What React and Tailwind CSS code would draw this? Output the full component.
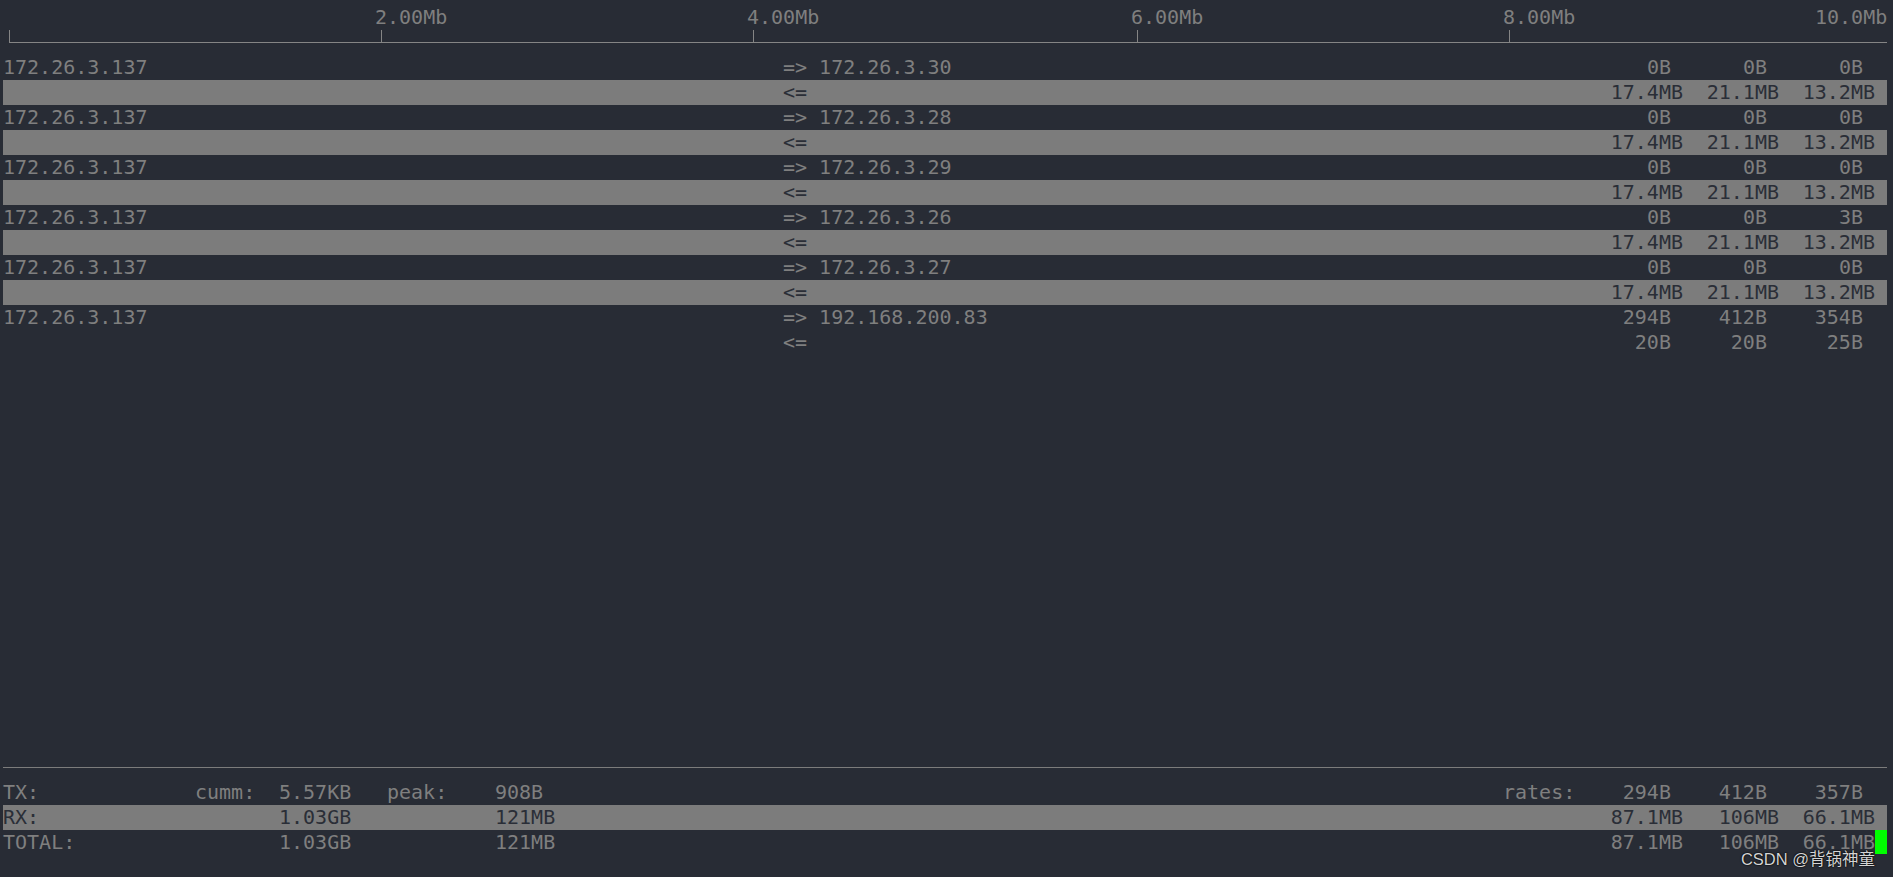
import React from "react";

const hosts = [
  ["172.26.3.30", ["0B ", "0B ", "0B "], ["17.4MB", "21.1MB", "13.2MB"], true],
  ["172.26.3.28", ["0B ", "0B ", "0B "], ["17.4MB", "21.1MB", "13.2MB"], true],
  ["172.26.3.29", ["0B ", "0B ", "0B "], ["17.4MB", "21.1MB", "13.2MB"], true],
  ["172.26.3.26", ["0B ", "0B ", "3B "], ["17.4MB", "21.1MB", "13.2MB"], true],
  ["172.26.3.27", ["0B ", "0B ", "0B "], ["17.4MB", "21.1MB", "13.2MB"], true],
  ["192.168.200.83", ["294B ", "412B ", "354B "], ["20B ", "20B ", "25B "], false],
];

function Nums({ vals }) {
  return (
    <>
      {vals.map((v, i) => (
        <span key={i} className="w-[96px] shrink-0 text-right whitespace-pre">
          {v}
        </span>
      ))}
    </>
  );
}

function Line({ bar, children }) {
  return (
    <div
      className={
        "flex h-[25px] leading-[25px] whitespace-pre " +
        (bar ? "bg-[#7c7c7c] text-[#2a2e37]" : "text-[#7f7f7f]")
      }
    >
      {children}
    </div>
  );
}

export default function App() {
  return (
    <div className="relative h-[877px] w-[1893px] overflow-hidden bg-[#282c35] pl-[3px] pt-[5px] font-['DejaVu_Sans_Mono','Liberation_Mono',monospace] text-[20px] text-[#7f7f7f]">
      <div className="flex w-[1884px] flex-col">
        {/* scale labels */}
        <div className="flex h-[25px] leading-[25px] whitespace-pre">
          <span className="w-[372px] shrink-0" />
          <span className="w-[372px] shrink-0">2.00Mb</span>
          <span className="w-[384px] shrink-0">4.00Mb</span>
          <span className="w-[372px] shrink-0">6.00Mb</span>
          <span className="w-[312px] shrink-0">8.00Mb</span>
          <span className="w-[72px] shrink-0">10.0Mb</span>
        </div>
        {/* ruler */}
        <div className="h-[25px]">
          <svg width="1884" height="25" className="block">
            <g stroke="#858585" strokeWidth="1" shapeRendering="crispEdges">
              <line x1="6.5" y1="12.5" x2="1884" y2="12.5" />
              <line x1="6.5" y1="0" x2="6.5" y2="12.5" />
              <line x1="378.5" y1="0" x2="378.5" y2="12.5" />
              <line x1="750.5" y1="0" x2="750.5" y2="12.5" />
              <line x1="1134.5" y1="0" x2="1134.5" y2="12.5" />
              <line x1="1506.5" y1="0" x2="1506.5" y2="12.5" />
            </g>
          </svg>
        </div>
        {/* host pairs */}
        {hosts.map(([dst, tx, rx, bar], i) => (
          <React.Fragment key={i}>
            <Line>
              <span className="w-[780px] shrink-0">172.26.3.137</span>
              <span className="w-[804px] shrink-0">{"=> " + dst}</span>
              <Nums vals={tx} />
              <span className="w-[12px] shrink-0" />
            </Line>
            <Line bar={bar}>
              <span className="w-[780px] shrink-0" />
              <span className="w-[804px] shrink-0">{"<="}</span>
              <Nums vals={rx} />
              <span className="w-[12px] shrink-0" />
            </Line>
          </React.Fragment>
        ))}
        {/* empty area */}
        <div className="h-[400px]" />
        {/* separator */}
        <div className="flex h-[25px] items-center">
          <div className="h-px w-full bg-[#7c7c7c]" />
        </div>
        {/* totals */}
        <Line>
          <span className="w-[192px] shrink-0">TX:</span>
          <span className="w-[84px] shrink-0">cumm:</span>
          <span className="w-[108px] shrink-0">5.57KB</span>
          <span className="w-[108px] shrink-0">peak:</span>
          <span className="w-[1008px] shrink-0">908B</span>
          <span className="w-[84px] shrink-0">rates:</span>
          <Nums vals={["294B ", "412B ", "357B "]} />
          <span className="w-[12px] shrink-0" />
        </Line>
        <Line bar>
          <span className="w-[276px] shrink-0">RX:</span>
          <span className="w-[216px] shrink-0">1.03GB</span>
          <span className="w-[1092px] shrink-0">121MB</span>
          <Nums vals={["87.1MB", "106MB", "66.1MB"]} />
          <span className="w-[12px] shrink-0" />
        </Line>
        <Line>
          <span className="w-[276px] shrink-0">TOTAL:</span>
          <span className="w-[216px] shrink-0">1.03GB</span>
          <span className="w-[1092px] shrink-0">121MB</span>
          <Nums vals={["87.1MB", "106MB", "66.1MB"]} />
          <span className="h-[24px] w-[12px] shrink-0 bg-[#00ff00]" />
        </Line>
      </div>
      {/* watermark */}
      <div className="absolute bottom-[10px] right-[18px] font-['Liberation_Sans','Noto_Sans_CJK_SC',sans-serif] text-[16.5px] leading-none text-[#d4d4d4] [text-shadow:0_0_2px_#000,0_0_1px_#000]">
        CSDN @背锅神童
      </div>
    </div>
  );
}
